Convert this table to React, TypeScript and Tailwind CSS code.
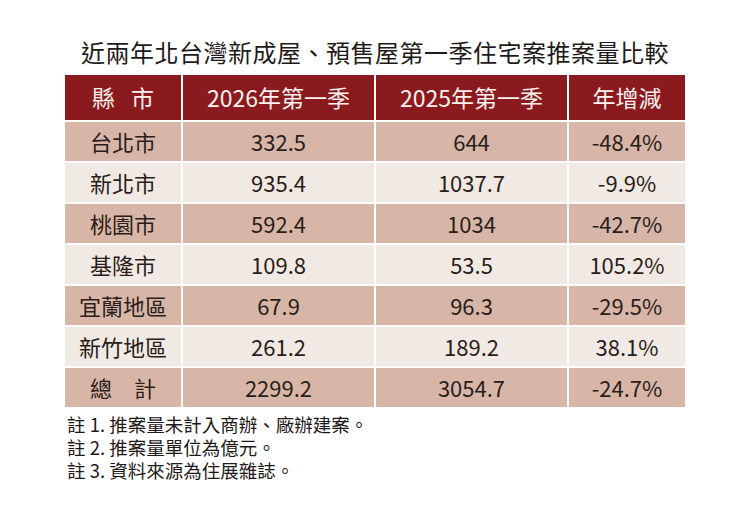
import React from "react";

const rows: [string, string, string, string][] = [
  ["台北市", "332.5", "644", "-48.4%"],
  ["新北市", "935.4", "1037.7", "-9.9%"],
  ["桃園市", "592.4", "1034", "-42.7%"],
  ["基隆市", "109.8", "53.5", "105.2%"],
  ["宜蘭地區", "67.9", "96.3", "-29.5%"],
  ["新竹地區", "261.2", "189.2", "38.1%"],
  ["總　計", "2299.2", "3054.7", "-24.7%"],
];

export default function App() {
  const font = { fontFamily: '"Noto Sans CJK TC", "Noto Sans", sans-serif' };
  return (
    <div className="w-[740px] h-[505px] bg-white overflow-hidden" style={font}>
      <div className="w-[620px] ml-[65px] pt-[36px]">
        <div className="h-[32px] leading-[32px] text-center text-[24px] tracking-[0.5px] text-[#1f1a1a] mb-[7px]">
          近兩年北台灣新成屋、預售屋第一季住宅案推案量比較
        </div>
        <div className="grid grid-cols-[116px_191px_191px_116px] gap-[2px] bg-white">
          <div className="h-[45px] flex items-center justify-center gap-[16px] bg-[#8b1a1f] text-[#fbf1ee] text-[23px]">
            <span>縣</span>
            <span>市</span>
          </div>
          {["2026年第一季", "2025年第一季", "年增減"].map((h) => (
            <div
              key={h}
              className="h-[45px] flex items-center justify-center bg-[#8b1a1f] text-[#fbf1ee] text-[23px]"
            >
              {h}
            </div>
          ))}
          {rows.map((r, i) =>
            r.map((c, j) => (
              <div
                key={`${i}-${j}`}
                className={`h-[39px] flex items-center justify-center text-[22px] text-[#2a1d1a] ${
                  i % 2 === 0 ? "bg-[#d8b6a7]" : "bg-[#f1e9e3]"
                }`}
              >
                {c}
              </div>
            ))
          )}
        </div>
        <div className="mt-[6px] ml-[2px] text-[18.5px] leading-[23px] text-[#1f1a1a]">
          <div className="h-[23px]">註 1. 推案量未計入商辦、廠辦建案。</div>
          <div className="h-[23px]">註 2. 推案量單位為億元。</div>
          <div className="h-[23px]">註 3. 資料來源為住展雜誌。</div>
        </div>
      </div>
    </div>
  );
}
